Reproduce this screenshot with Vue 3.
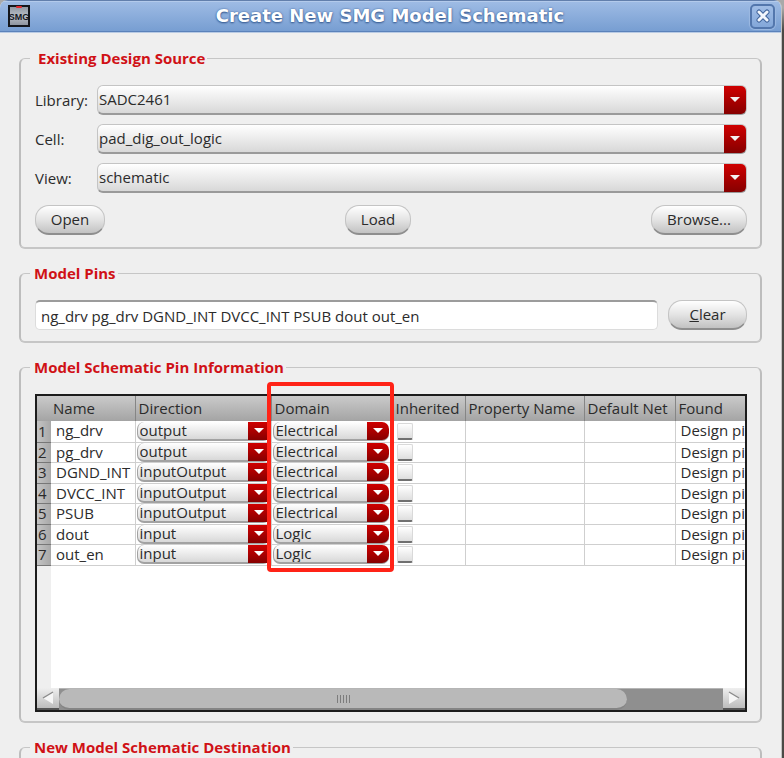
<script setup>
import { ref } from 'vue'

const source = ref([
  { id: 'library', label: 'Library:', value: 'SADC2461' },
  { id: 'cell', label: 'Cell:', value: 'pad_dig_out_logic' },
  { id: 'view', label: 'View:', value: 'schematic' },
])

const modelPins = ref('ng_drv pg_drv DGND_INT DVCC_INT PSUB dout out_en')

const directions = ['input', 'output', 'inputOutput']
const domains = ['Electrical', 'Logic']

const pins = ref([
  { name: 'ng_drv', direction: 'output', domain: 'Electrical', inherited: false },
  { name: 'pg_drv', direction: 'output', domain: 'Electrical', inherited: false },
  { name: 'DGND_INT', direction: 'inputOutput', domain: 'Electrical', inherited: false },
  { name: 'DVCC_INT', direction: 'inputOutput', domain: 'Electrical', inherited: false },
  { name: 'PSUB', direction: 'inputOutput', domain: 'Electrical', inherited: false },
  { name: 'dout', direction: 'input', domain: 'Logic', inherited: false },
  { name: 'out_en', direction: 'input', domain: 'Logic', inherited: false },
])
</script>

<template>
  <main class="window">
    <header class="titlebar">
      <svg class="logo" viewBox="0 0 22 22" aria-hidden="true">
        <defs>
          <linearGradient id="logo-fill" x1="0" y1="0" x2="0" y2="1">
            <stop offset="0" stop-color="#8b93a0" />
            <stop offset="0.5" stop-color="#b9bec6" />
            <stop offset="1" stop-color="#8a919c" />
          </linearGradient>
        </defs>
        <rect x="1" y="1" width="20" height="20" fill="url(#logo-fill)" stroke="#14161c" stroke-width="2" />
        <rect x="8" y="1" width="6" height="2" rx="1" fill="#e0282e" />
        <text x="11" y="15" text-anchor="middle" class="logo-text">SMG</text>
      </svg>
      <h1>Create New SMG Model Schematic</h1>
      <button class="close" type="button" aria-label="Close">
        <svg viewBox="0 0 14 14" aria-hidden="true">
          <path d="M3 3 11 11M11 3 3 11" stroke="#41659c" stroke-width="5" stroke-linecap="round" />
          <path d="M3 3 11 11M11 3 3 11" stroke="#f2f6fc" stroke-width="3" stroke-linecap="round" />
        </svg>
      </button>
    </header>

    <div class="body">
      <fieldset class="group source">
        <legend class="indented">Existing Design Source</legend>
        <div class="fields">
          <template v-for="field in source" :key="field.id">
            <label :for="field.id">{{ field.label }}</label>
            <span class="combo">
              <select :id="field.id" v-model="field.value">
                <option>{{ field.value }}</option>
              </select>
              <span class="drop"><svg viewBox="0 0 10 6"><path d="M0 0H10L5 5Z" fill="#f4f0f0" /></svg></span>
            </span>
          </template>
        </div>
        <div class="actions">
          <button class="push open" type="button">Open</button>
          <button class="push load" type="button">Load</button>
          <button class="push browse" type="button">Browse...</button>
        </div>
      </fieldset>

      <fieldset class="group pins">
        <legend>Model Pins</legend>
        <div class="pin-row">
          <input v-model="modelPins" type="text" aria-label="Model Pins" />
          <button class="push clear" type="button"><u>C</u>lear</button>
        </div>
      </fieldset>

      <fieldset class="group info">
        <legend>Model Schematic Pin Information</legend>
        <div class="table-area">
          <div class="frame">
            <div class="viewport">
              <table>
                <colgroup>
                  <col class="c-num" /><col class="c-name" /><col class="c-dir" /><col class="c-dom" />
                  <col class="c-inh" /><col class="c-prop" /><col class="c-net" /><col />
                </colgroup>
                <thead>
                  <tr>
                    <td></td>
                    <th class="first">Name</th>
                    <th>Direction</th>
                    <th>Domain</th>
                    <th>Inherited</th>
                    <th>Property Name</th>
                    <th>Default Net</th>
                    <th>Found</th>
                  </tr>
                </thead>
                <tbody>
                  <tr v-for="(pin, i) in pins" :key="pin.name">
                    <th scope="row">{{ i + 1 }}</th>
                    <td class="text">{{ pin.name }}</td>
                    <td>
                      <span class="combo small">
                        <select v-model="pin.direction" :aria-label="pin.name + ' direction'">
                          <option v-for="d in directions" :key="d">{{ d }}</option>
                        </select>
                        <span class="drop square"><svg viewBox="0 0 10 6"><path d="M0 0H10L5 5Z" fill="#fff" /></svg></span>
                      </span>
                    </td>
                    <td class="domain">
                      <span class="combo small">
                        <select v-model="pin.domain" :aria-label="pin.name + ' domain'">
                          <option v-for="d in domains" :key="d">{{ d }}</option>
                        </select>
                        <span class="drop"><svg viewBox="0 0 10 6"><path d="M0 0H10L5 5Z" fill="#fff" /></svg></span>
                      </span>
                    </td>
                    <td><input v-model="pin.inherited" type="checkbox" :aria-label="pin.name + ' inherited'" /></td>
                    <td></td>
                    <td></td>
                    <td class="text">Design pin</td>
                  </tr>
                </tbody>
              </table>
              <div class="gutter"></div>
            </div>
            <div class="scrollbar">
              <button type="button" aria-label="Scroll left">
                <svg viewBox="0 0 12 14"><path d="M11 1V13L1 7Z" fill="#f6f6f6" /><path d="M11 1 1 7" stroke="#8a8a8a" stroke-width="1.4" /></svg>
              </button>
              <div class="track">
                <div class="thumb"><i></i><i></i><i></i><i></i><i></i></div>
                <div class="rest"></div>
              </div>
              <button type="button" aria-label="Scroll right">
                <svg viewBox="0 0 12 14"><path d="M1 1V13L11 7Z" fill="#f6f6f6" /><path d="M1 1 11 7" stroke="#8a8a8a" stroke-width="1.4" /></svg>
              </button>
            </div>
          </div>
          <div class="highlight"></div>
        </div>
      </fieldset>

      <fieldset class="group destination">
        <legend>New Model Schematic Destination</legend>
      </fieldset>
    </div>
  </main>
</template>

<style>
body {
  background: linear-gradient(#a9a9a9 0 8px, #4b4a46 30px);
  overflow: hidden;
}
</style>

<style scoped>
* {
  box-sizing: border-box;
}

.window {
  height: 100vh;
  margin-right: 2px;
  overflow: hidden;
  border-radius: 8px 8px 0 0;
  border-right: 1px solid #c2c2c2;
  background: #efefef;
  color: #2b2b2b;
  font: 15px/20px "Open Sans", "Noto Sans", sans-serif;
}

button,
input,
select {
  margin: 0;
  color: inherit;
  font: inherit;
}

.titlebar {
  display: grid;
  grid-template-columns: 22px 1fr 25px;
  align-items: center;
  height: 33px;
  padding: 0 6px 1px 8px;
  border-top: 1px solid #627fac;
  border-bottom: 1px solid #b9cbe4;
  background: linear-gradient(#9fbce5, #769dd1);
  box-shadow: inset 0 -1px #5b82ba, inset 0 1px #b3caeb;
}

.logo {
  width: 22px;
  height: 22px;
}

.logo-text {
  fill: #14161c;
  font: bold 9px "Liberation Sans Narrow", "Liberation Sans", sans-serif;
}

h1 {
  margin: 0;
  color: #fff;
  font: bold 18px/24px "DejaVu Sans", sans-serif;
  text-align: center;
  text-shadow: 0 1px 2px #35598f, 0 0 2px #4a6da3;
  white-space: nowrap;
}

.close {
  display: grid;
  place-items: center;
  width: 25px;
  height: 25px;
  padding: 0;
  border: 2px solid #5377ad;
  border-radius: 5px;
  background: linear-gradient(#a0bde6, #83a7d9);
  box-shadow: 0 0 1px 1px #9dbae2;
}

.close svg {
  width: 14px;
  height: 14px;
}

.body {
  padding: 15px 19px 0;
}

.group {
  min-width: 0;
  margin: 0 0 14px;
  padding: 0 13px 0 14px;
  border: 1px solid #c6c6c6;
  border-width: 1px 2px 2px;
  border-right-color: #bdbdbd;
  border-left-color: #bdbdbd;
  border-radius: 6px;
}

legend {
  height: 20px;
  margin-left: -5px;
  padding: 0 2px 0 4px;
  color: #d01116;
  font-weight: bold;
}

legend.indented {
  padding-left: 8px;
}

.source {
  padding-bottom: 12px;
}

.fields {
  display: grid;
  grid-template-columns: 54px 1fr;
  align-items: center;
  gap: 9px 8px;
  padding-top: 17px;
}

.fields label {
  padding-bottom: 1px;
}

.combo {
  display: grid;
  height: 30px;
}

.combo select {
  grid-area: 1 / 1;
  min-width: 0;
  width: 100%;
  height: 100%;
  padding: 0 24px 1px 1px;
  appearance: none;
  border: 1px solid #c4c4c4;
  border-bottom: 2px solid #9a9a9a;
  border-radius: 6px;
  background: linear-gradient(#fff, #d8d8d8);
}

.drop {
  display: grid;
  place-items: center;
  grid-area: 1 / 1;
  justify-self: end;
  align-self: stretch;
  width: 22px;
  margin: 1px;
  border-radius: 0 5px 5px 0;
  background: linear-gradient(#cf0000, #860000);
  pointer-events: none;
}

.drop svg {
  width: 10px;
  height: 6px;
}

.actions {
  display: flex;
  justify-content: space-between;
  padding-top: 12px;
}

.push {
  height: 30px;
  padding: 0 0 1px;
  border: 1px solid #c4c4c4;
  border-bottom: 2px solid #8e8e8e;
  border-radius: 14px;
  background: linear-gradient(#fff, #e4e4e4 50%, #c2c2c2);
}

.open {
  width: 70px;
}

.load {
  width: 66px;
}

.browse {
  width: 96px;
}

.clear {
  width: 79px;
}

.pins {
  padding-bottom: 11px;
}

.pin-row {
  display: flex;
  gap: 10px;
  padding-top: 17px;
}

.pin-row input {
  flex: 1;
  min-width: 0;
  height: 30px;
  padding: 0 5px;
  border: 1px solid #dcdcdc;
  border-top: 2px solid #9c9c9c;
  border-radius: 5px;
  background: #fff;
}

.info {
  padding-bottom: 9px;
}

.table-area {
  position: relative;
  padding-top: 17px;
}

.frame {
  border: 2px solid #1c1c1c;
  background: #fff;
}

.viewport {
  display: flex;
  flex-direction: column;
  height: 292px;
  overflow: hidden;
}

table {
  width: 100%;
  table-layout: fixed;
  border-collapse: collapse;
}

.c-num { width: 14px; }
.c-name { width: 84px; }
.c-dir { width: 136px; }
.c-dom { width: 121px; }
.c-inh { width: 73px; }
.c-prop { width: 119px; }
.c-net { width: 91px; }

th,
td {
  padding: 0;
  font-weight: normal;
  line-height: 19px;
  text-align: left;
  white-space: nowrap;
  overflow: hidden;
}

thead tr {
  height: 25px;
  background: linear-gradient(#cacaca, #a4a4a4);
}

thead th {
  padding-left: 3px;
  border-left: 1px solid #858585;
}

thead th.first {
  padding-left: 2px;
  border-left: 0;
}

tbody tr {
  height: 20px;
}

tbody tr:nth-child(odd) {
  height: 21px;
}

tbody th {
  padding-left: 1px;
  border-bottom: 1px solid #777;
  background: linear-gradient(90deg, #c4c4c4, #a8a8a8);
}

tbody td {
  height: 19px;
  border-right: 1px solid #cfcfcf;
  border-bottom: 1px solid #cfcfcf;
}

tbody td:last-child {
  border-right: 0;
}

tbody .text {
  padding-left: 5px;
  vertical-align: top;
  line-height: 18px;
}

tbody .domain {
  padding-right: 2px;
}

.small {
  height: 19px;
  padding: 0 1px;
}

.small select {
  padding: 0 20px 0 2px;
  border-width: 0 0 2px 1px;
  border-color: #a2a2a2;
  border-radius: 7px;
  line-height: 17px;
}

.small .drop {
  margin: 0 0 1px;
  border-radius: 0 7px 7px 0;
}

.small .drop.square {
  border-radius: 0;
}

input[type="checkbox"] {
  display: block;
  width: 16px;
  height: 17px;
  margin-left: 4px;
  appearance: none;
  border: 1px solid #d9d9d9;
  border-bottom: 2px solid #707070;
  border-radius: 2px;
  background: linear-gradient(#fff, #dedede);
}

.gutter {
  flex: 1;
  width: 14px;
  background: #efefef;
}

.scrollbar {
  display: flex;
  height: 22px;
}

.scrollbar button {
  display: grid;
  place-items: center;
  width: 22px;
  padding: 0;
  border: 0;
  border-bottom: 2px solid #555;
  background: linear-gradient(#efefef, #bdbdbd);
}

.scrollbar svg {
  width: 12px;
  height: 14px;
  fill: none;
}

.track {
  display: flex;
  flex: 1;
  border-top: 1px solid #b5b5b5;
  background: #8f8f8f;
}

.thumb {
  display: flex;
  flex: 71;
  align-items: center;
  justify-content: center;
  gap: 2px;
  border-bottom: 2px solid #858585;
  border-radius: 11px;
  background: #b9b9b9;
}

.thumb i {
  width: 1px;
  height: 8px;
  background: #7d7d7d;
}

.rest {
  flex: 12;
}

.highlight {
  position: absolute;
  top: 5px;
  left: 232px;
  width: 127px;
  height: 190px;
  border: 4px solid #ff2317;
  border-radius: 4px;
  pointer-events: none;
}

.destination {
  min-height: 200px;
}
</style>
